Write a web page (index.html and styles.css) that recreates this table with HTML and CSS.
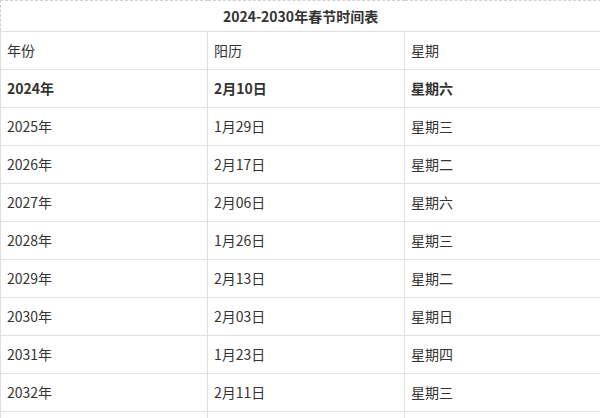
FILE: index.html
```html
<!DOCTYPE html>
<html lang="zh-CN">
<head>
<meta charset="utf-8">
<title>2024-2030年春节时间表</title>
<link rel="stylesheet" href="styles.css">
</head>
<body>
<table class="sched">
  <colgroup><col class="c1"><col class="c2"><col class="c3"></colgroup>
  <tr class="title-row"><td colspan="3" class="title">2024-2030年春节时间表</td></tr>
  <tr><td>年份</td><td>阳历</td><td>星期</td></tr>
  <tr class="hl"><td>2024年</td><td>2月10日</td><td>星期六</td></tr>
  <tr><td>2025年</td><td>1月29日</td><td>星期三</td></tr>
  <tr><td>2026年</td><td>2月17日</td><td>星期二</td></tr>
  <tr><td>2027年</td><td>2月06日</td><td>星期六</td></tr>
  <tr><td>2028年</td><td>1月26日</td><td>星期三</td></tr>
  <tr><td>2029年</td><td>2月13日</td><td>星期二</td></tr>
  <tr><td>2030年</td><td>2月03日</td><td>星期日</td></tr>
  <tr><td>2031年</td><td>1月23日</td><td>星期四</td></tr>
  <tr><td>2032年</td><td>2月11日</td><td>星期三</td></tr>
  <tr><td></td><td></td><td></td></tr>
</table>
</body>
</html>
```
FILE: styles.css
```css
html, body {
  margin: 0;
  padding: 0;
  background: #fff;
}
body {
  font-family: "Noto Sans CJK SC", "Noto Sans", sans-serif;
  font-size: 14px;
  color: #333;
}
.sched {
  width: 600px;
  border-collapse: collapse;
  table-layout: fixed;
}
.c1 { width: 207px; }
.c2 { width: 197px; }
.c3 { width: 196px; }
.sched td {
  border: 1px solid #e0e0e0;
  height: 38px;
  padding: 0 6px 1px;
  line-height: 20px;
  vertical-align: middle;
  box-sizing: border-box;
}
.sched .title {
  border: 1px dashed #d0d0d0;
  border-bottom: 1px solid #e0e0e0;
  height: 31px;
  text-align: center;
  font-weight: bold;
  color: #333;
}
.hl td {
  font-weight: bold;
}
```
